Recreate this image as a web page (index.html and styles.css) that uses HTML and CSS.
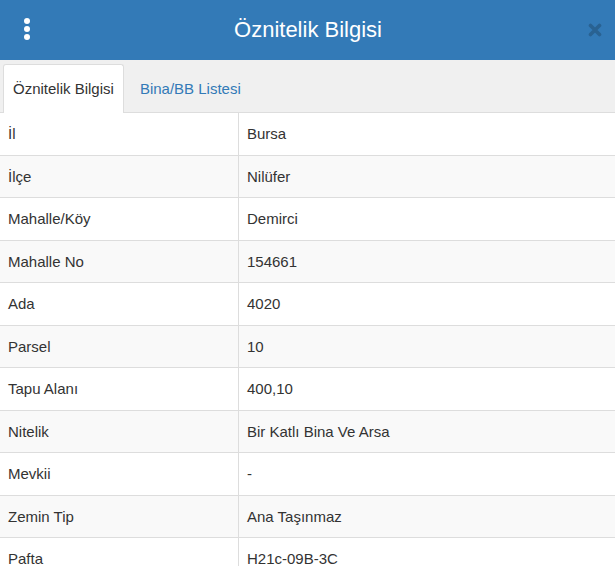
FILE: index.html
```html
<!DOCTYPE html>
<html lang="tr">
<head>
  <meta charset="UTF-8" />
  <meta name="viewport" content="width=device-width, initial-scale=1.0"/>
  <title>Öznitelik Bilgisi</title>
  <link rel="stylesheet" href="styles.css">
</head>
<body>
  <div class="panel">
    <div class="panel-header">
      <button class="menu-btn" title="Menü">
        <span class="dot"></span>
        <span class="dot"></span>
        <span class="dot"></span>
      </button>
      <h1>Öznitelik Bilgisi</h1>
      <button class="close-btn" title="Kapat">
        <svg width="14" height="14" viewBox="0 0 14 14">
          <path d="M2.5 2.5 L11.5 11.5 M11.5 2.5 L2.5 11.5" stroke="currentColor" stroke-width="3.6" stroke-linecap="round"/>
        </svg>
      </button>
    </div>

    <ul class="tabs">
      <li class="tab active"><a href="#">Öznitelik Bilgisi</a></li>
      <li class="tab"><a href="#">Bina/BB Listesi</a></li>
    </ul>

    <table class="info-table">
      <tbody>
        <tr><td>İl</td><td>Bursa</td></tr>
        <tr><td>İlçe</td><td>Nilüfer</td></tr>
        <tr><td>Mahalle/Köy</td><td>Demirci</td></tr>
        <tr><td>Mahalle No</td><td>154661</td></tr>
        <tr><td>Ada</td><td>4020</td></tr>
        <tr><td>Parsel</td><td>10</td></tr>
        <tr><td>Tapu Alanı</td><td>400,10</td></tr>
        <tr><td>Nitelik</td><td>Bir Katlı Bina Ve Arsa</td></tr>
        <tr><td>Mevkii</td><td>-</td></tr>
        <tr><td>Zemin Tip</td><td>Ana Taşınmaz</td></tr>
        <tr><td>Pafta</td><td>H21c-09B-3C</td></tr>
      </tbody>
    </table>
  </div>
</body>
</html>
```

FILE: styles.css
```css
body {
  margin: 0;
  font-family: 'Liberation Sans', Arial, sans-serif;
  background-color: #ffffff;
  color: #333;
}

.panel {
  width: 615px;
}

.panel-header {
  height: 60px;
  background-color: #337ab7;
  display: flex;
  align-items: center;
}

.panel-header h1 {
  flex: 1;
  margin: 0;
  text-align: center;
  color: #fff;
  font-size: 22px;
  font-weight: normal;
  padding-right: 7px;
}

.menu-btn {
  width: 52px;
  height: 60px;
  display: flex;
  flex-direction: column;
  align-items: center;
  justify-content: center;
  gap: 2px;
  background: none;
  border: none;
  padding: 0 0 2px 1px;
  cursor: pointer;
}

.dot {
  width: 6px;
  height: 6px;
  border-radius: 50%;
  background-color: #fff;
}

.close-btn {
  width: 44px;
  height: 60px;
  display: flex;
  align-items: center;
  justify-content: center;
  background: none;
  border: none;
  padding: 0 0 0 3px;
  color: #296292;
  cursor: pointer;
}

.tabs {
  list-style: none;
  margin: 0;
  padding: 4px 0 0 3px;
  display: flex;
  background-color: #f0f0f0;
  border-bottom: 1px solid #ddd;
}

.tab {
  margin-bottom: -1px;
  margin-right: 2px;
}

.tab a {
  display: block;
  padding: 14px 9px;
  line-height: 19px;
  font-size: 15px;
  color: #337ab7;
  text-decoration: none;
  border: 1px solid transparent;
  border-bottom: none;
  border-radius: 3px 3px 0 0;
}

.tab.active a {
  color: #333;
  background-color: #fff;
  border-color: #ddd;
  padding-bottom: 15px;
}

.tab + .tab a {
  padding-left: 13px;
}

.info-table {
  width: 100%;
  border-collapse: collapse;
  font-size: 15px;
}

.info-table td {
  padding: 11px 8px;
  line-height: 19.5px;
  border-bottom: 1px solid #ddd;
  vertical-align: middle;
}

.info-table td:first-child {
  width: 222px;
  border-right: 1px solid #ddd;
}

.info-table tr:nth-child(even) td {
  background-color: #f9f9f9;
}
```
